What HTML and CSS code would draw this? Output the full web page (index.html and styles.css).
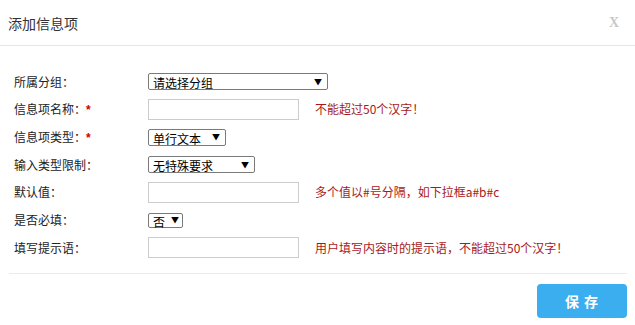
FILE: index.html
```html
<!DOCTYPE html>
<html lang="zh-CN">
<head>
  <meta charset="UTF-8" />
  <title>添加信息项</title>
  <link rel="stylesheet" href="styles.css">
</head>
<body>
  <div class="dialog">
    <div class="dialog-head">
      <span class="dialog-title">添加信息项</span>
      <span class="dialog-close">X</span>
    </div>

    <div class="form">
      <div class="row">
        <label class="row-label">所属分组：</label>
        <div class="select select-group">
          <span>请选择分组</span><span class="arrow">▼</span>
        </div>
      </div>

      <div class="row">
        <label class="row-label">信息项名称：<span class="req">*</span></label>
        <input class="text-input" type="text" />
        <span class="hint">不能超过50个汉字！</span>
      </div>

      <div class="row">
        <label class="row-label">信息项类型：<span class="req">*</span></label>
        <div class="select select-type">
          <span>单行文本</span><span class="arrow">▼</span>
        </div>
      </div>

      <div class="row">
        <label class="row-label">输入类型限制：</label>
        <div class="select select-limit">
          <span>无特殊要求</span><span class="arrow">▼</span>
        </div>
      </div>

      <div class="row">
        <label class="row-label">默认值：</label>
        <input class="text-input" type="text" />
        <span class="hint">多个值以#号分隔，如下拉框a#b#c</span>
      </div>

      <div class="row">
        <label class="row-label">是否必填：</label>
        <div class="select select-required">
          <span>否</span><span class="arrow">▼</span>
        </div>
      </div>

      <div class="row">
        <label class="row-label">填写提示语：</label>
        <input class="text-input" type="text" />
        <span class="hint">用户填写内容时的提示语，不能超过50个汉字！</span>
      </div>
    </div>

    <div class="dialog-foot">
      <button class="btn-save">保 存</button>
    </div>
  </div>
</body>
</html>
```

FILE: styles.css
```css
body {
  margin: 0;
  background: #ffffff;
  font-family: "Noto Sans CJK SC", "Noto Sans", sans-serif;
  color: #333;
}

.dialog-head {
  height: 45px;
  border-bottom: 1px solid #e5e5e5;
  display: flex;
  align-items: center;
  justify-content: space-between;
  padding: 0 16px 0 8px;
}
.dialog-title {
  font-size: 14px;
  color: #333;
  line-height: 1;
  margin-top: 1px;
}
.dialog-close {
  font-family: "Liberation Serif", serif;
  font-weight: bold;
  font-size: 14px;
  color: #c8c8c8;
}

.form {
  padding-top: 22px;
}
.row {
  display: flex;
  align-items: center;
  height: 27.67px;
  padding-left: 14px;
}
.row-label {
  width: 134px;
  font-size: 12px;
  line-height: 1;
  color: #222;
}
.req {
  color: #d00000;
  font-family: "Liberation Sans", sans-serif;
  font-weight: bold;
  font-size: 12px;
}

.select {
  display: flex;
  align-items: center;
  justify-content: space-between;
  box-sizing: border-box;
  height: 17px;
  border: 1px solid #7a7a7a;
  border-radius: 2px;
  padding: 0 5px 0 4px;
  font-size: 12px;
  color: #000;
  line-height: 1;
}
.select span:first-child {
  margin-top: 3px;
}
.arrow {
  font-size: 8px;
  color: #000;
}
.select-group { width: 180px; }
.select-type { width: 78px; }
.select-limit { width: 107px; }
.select-required { width: 35px; height: 15px; padding: 0 3px 0 4px; }

.text-input {
  box-sizing: border-box;
  width: 151px;
  height: 21px;
  margin: 0;
  border: 1px solid #cccccc;
  padding: 0 4px;
  font-size: 12px;
}
.hint {
  margin-left: 16px;
  font-size: 12px;
  line-height: 1;
  color: #a81a1a;
}

.dialog-foot {
  margin: 11px 8px 0 9px;
  padding-top: 10px;
  border-top: 1px solid #ebebeb;
  display: flex;
  justify-content: flex-end;
}
.btn-save {
  width: 90px;
  height: 34px;
  border: none;
  border-radius: 4px;
  background-color: #3aaeee;
  color: #fff;
  font-family: "Noto Sans CJK SC", sans-serif;
  font-size: 14px;
  font-weight: bold;
  letter-spacing: 1px;
  cursor: pointer;
}
```
